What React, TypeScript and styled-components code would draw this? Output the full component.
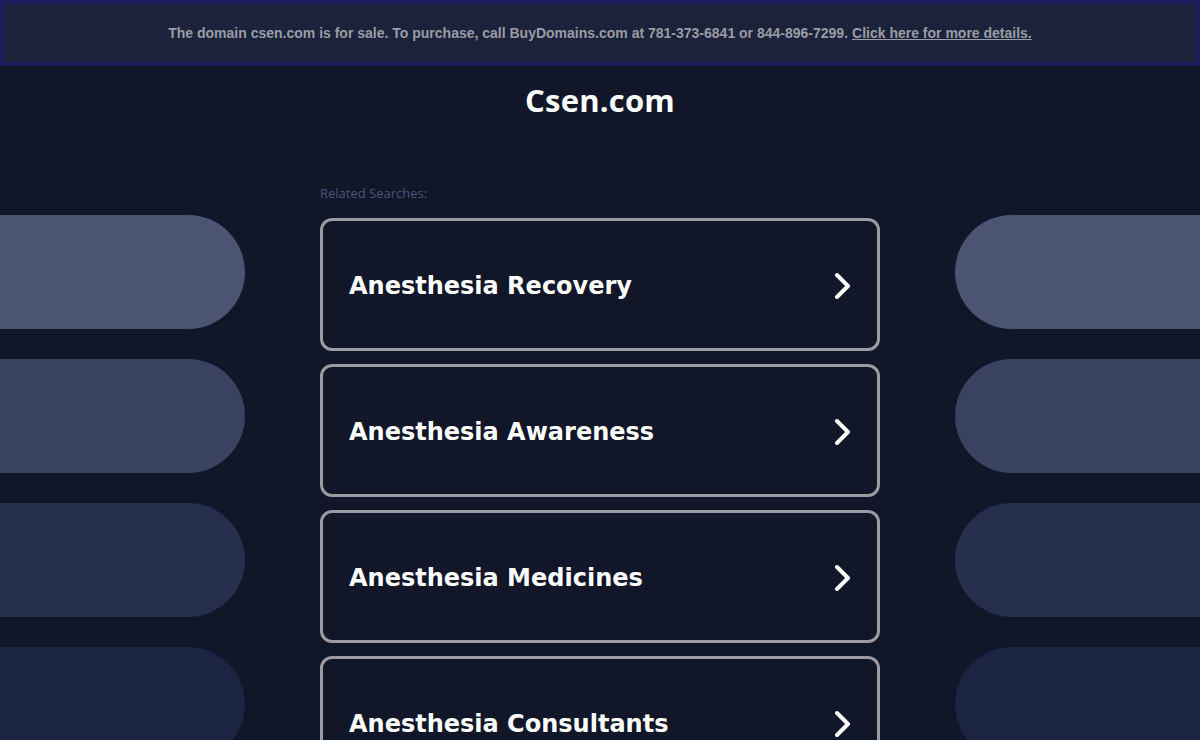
import React from "react";
import styled, { createGlobalStyle } from "styled-components";

const Global = createGlobalStyle`
  html, body { margin: 0; padding: 0; background: #111629; }
  body { font-family: "Liberation Sans", Arial, sans-serif; overflow: hidden; }
`;

const Page = styled.div`
  width: 1200px;
  min-height: 740px;
  background: #111629;
`;

const Banner = styled.div`
  box-sizing: border-box;
  height: 66px;
  border: 4px solid #1b1e5c;
  background: #1b2239;
  display: flex;
  align-items: center;
  justify-content: center;
  font-family: "Liberation Sans", Arial, sans-serif;
  font-weight: 700;
  font-size: 14px;
  color: #9a9ca6;
`;

const BannerLink = styled.a`
  color: #9a9ca6;
  text-decoration: underline;
  margin-left: 4px;
`;

const Title = styled.h1`
  margin: 0;
  padding-top: 16px;
  text-align: center;
  font-family: "Open Sans", "Noto Sans", sans-serif;
  font-weight: 700;
  font-size: 31px;
  line-height: 36px;
  color: #ffffff;
  letter-spacing: 0.2px;
`;

const Main = styled.div`
  display: grid;
  grid-template-columns: 245px 1fr 560px 1fr 245px;
  margin-top: 66px;
`;

const SideColumn = styled.div<{ $side: "left" | "right" }>`
  grid-column: ${(p) => (p.$side === "left" ? 1 : 5)};
  display: flex;
  flex-direction: column;
  gap: 30px;
  padding-top: 31px;
`;

const Pill = styled.div<{ $tone: string; $side: "left" | "right" }>`
  height: 114px;
  background: ${(p) => p.$tone};
  border-radius: ${(p) => (p.$side === "left" ? "0 57px 57px 0" : "57px 0 0 57px")};
`;

const Center = styled.div`
  grid-column: 3;
  display: flex;
  flex-direction: column;
`;

const Label = styled.div`
  font-family: "Open Sans", "Noto Sans", sans-serif;
  font-size: 13px;
  line-height: 18px;
  color: #4b5579;
  margin-bottom: 16px;
`;

const CardList = styled.div`
  display: flex;
  flex-direction: column;
  gap: 13px;
`;

const Card = styled.a`
  box-sizing: border-box;
  height: 133px;
  border: 3px solid #9b9ba1;
  border-radius: 12px;
  display: flex;
  align-items: center;
  justify-content: space-between;
  padding: 0 26px 0 26px;
  text-decoration: none;
  background: #111629;
`;

const CardText = styled.span`
  font-family: "DejaVu Sans", Verdana, sans-serif;
  font-weight: 700;
  font-size: 24px;
  color: #ffffff;
  padding-top: 2px;
`;

const Chevron = () => (
  <svg width="17" height="28" viewBox="0 0 17 28">
    <path
      d="M3 4 L14 15 L3 26"
      fill="none"
      stroke="#ffffff"
      strokeWidth="4"
      strokeLinecap="round"
      strokeLinejoin="round"
    />
  </svg>
);

const tones = ["#4b5573", "#394361", "#262e4d", "#1c2444"];
const items = [
  "Anesthesia Recovery",
  "Anesthesia Awareness",
  "Anesthesia Medicines",
  "Anesthesia Consultants",
];

export default function App() {
  return (
    <Page>
      <Global />
      <Banner>
        The domain csen.com is for sale. To purchase, call BuyDomains.com at 781-373-6841 or 844-896-7299.
        <BannerLink href="#">Click here for more details.</BannerLink>
      </Banner>
      <Title>Csen.com</Title>
      <Main>
        <SideColumn $side="left">
          {tones.map((t) => (
            <Pill key={t} $tone={t} $side="left" />
          ))}
        </SideColumn>
        <Center>
          <Label>Related Searches:</Label>
          <CardList>
            {items.map((it) => (
              <Card key={it} href="#">
                <CardText>{it}</CardText>
                <Chevron />
              </Card>
            ))}
          </CardList>
        </Center>
        <SideColumn $side="right">
          {tones.map((t) => (
            <Pill key={t} $tone={t} $side="right" />
          ))}
        </SideColumn>
      </Main>
    </Page>
  );
}
